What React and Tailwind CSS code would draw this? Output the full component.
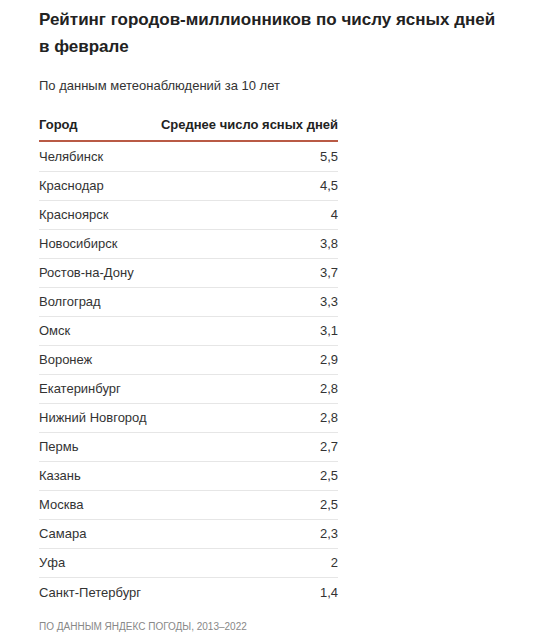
import React from "react";

const rows = [
  ["Челябинск", "5,5"],
  ["Краснодар", "4,5"],
  ["Красноярск", "4"],
  ["Новосибирск", "3,8"],
  ["Ростов-на-Дону", "3,7"],
  ["Волгоград", "3,3"],
  ["Омск", "3,1"],
  ["Воронеж", "2,9"],
  ["Екатеринбург", "2,8"],
  ["Нижний Новгород", "2,8"],
  ["Пермь", "2,7"],
  ["Казань", "2,5"],
  ["Москва", "2,5"],
  ["Самара", "2,3"],
  ["Уфа", "2"],
  ["Санкт-Петербург", "1,4"],
];

export default function App() {
  return (
    <div
      className="w-[533px] h-[638px] bg-white pl-[39px] pt-[6px] text-[#333]"
      style={{ fontFamily: '"Liberation Sans", Arial, sans-serif' }}
    >
      <h1 className="text-[17px] leading-[27px] font-bold text-[#222]">
        Рейтинг городов-миллионников по числу ясных дней
        <br />в феврале
      </h1>
      <p className="mt-[16px] text-[13px] leading-[20px] text-[#333]">
        По данным метеонаблюдений за 10 лет
      </p>
      <div className="mt-[16px] w-[299px]">
        <div className="flex h-[30px] items-center justify-between border-b-[2px] border-[#b95a45] pb-[2px] text-[13px] font-bold text-[#222]">
          <span>Город</span>
          <span>Среднее число ясных дней</span>
        </div>
        <div className="pt-[1px]">
          {rows.map(([city, val], i) => (
            <div
              key={city}
              className={
                "flex h-[29px] items-center justify-between text-[13px] text-[#333] " +
                (i < rows.length - 1 ? "border-b border-[#e6e6e6]" : "")
              }
            >
              <span>{city}</span>
              <span>{val}</span>
            </div>
          ))}
        </div>
      </div>
      <p className="mt-[13px] text-[10px] leading-[14px] uppercase text-[#888]">
        По данным Яндекс Погоды, 2013–2022
      </p>
    </div>
  );
}
